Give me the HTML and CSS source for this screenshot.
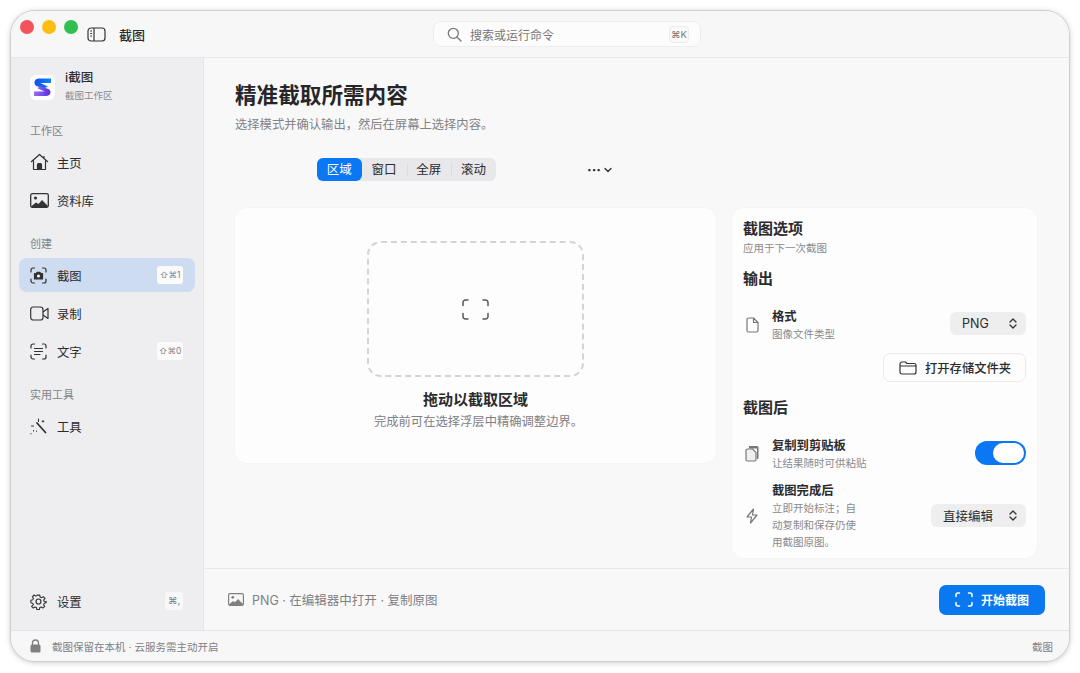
FILE: index.html
```html
<!DOCTYPE html>
<html lang="zh-CN">
<head>
    <meta charset="UTF-8">
    <meta name="viewport" content="width=device-width, initial-scale=1.0">
    <title>截图</title>
    <link rel="stylesheet" href="styles.css">
</head>
<body>
    <div class="window">
        <header class="titlebar">
            <div class="titlebar-left">
                <div class="lights">
                    <span class="light red"></span>
                    <span class="light yellow"></span>
                    <span class="light green"></span>
                </div>
                <svg class="sidebar-toggle" width="19" height="15" viewBox="0 0 19 15" fill="none" stroke="#333" stroke-width="1.2">
                    <rect x="1" y="1" width="17" height="13" rx="3"/>
                    <path d="M7 1v13M3.2 4h1.8M3.2 6.5h1.8M3.2 9h1.8"/>
                </svg>
                <span class="window-title">截图</span>
            </div>
            <div class="search">
                <svg width="15" height="15" viewBox="0 0 15 15" fill="none" stroke="#777" stroke-width="1.3" stroke-linecap="round">
                    <circle cx="6.3" cy="6.3" r="5"/>
                    <path d="M10 10l4 4"/>
                </svg>
                <span class="search-text">搜索或运行命令</span>
                <span class="search-key">⌘K</span>
            </div>
        </header>

        <div class="middle">
            <aside class="sidebar">
                <div class="brand">
                    <svg class="logo" width="25" height="25" viewBox="0 0 25 25">
                        <defs>
                            <linearGradient id="logoTop" x1="0" y1="0" x2="1" y2="0">
                                <stop offset="0" stop-color="#1a4ff0"/>
                                <stop offset="1" stop-color="#0a84ff"/>
                            </linearGradient>
                            <linearGradient id="logoBottom" x1="0" y1="0" x2="1" y2="0">
                                <stop offset="0" stop-color="#9a6cf4"/>
                                <stop offset="1" stop-color="#5a2fd8"/>
                            </linearGradient>
                        </defs>
                        <rect width="25" height="25" rx="6" fill="#fff"/>
                        <path d="M9 3.500H21V8H10.500L18 11.500L14 13.500L6.500 11C3.500 9.500 3.500 3.500 9 3.500z" fill="url(#logoTop)"/>
                        <path d="M4 21V16.500H14.500L7 13L11 11.500L18.500 14C21.500 15.500 21.500 21 16 21z" fill="url(#logoBottom)"/>
                    </svg>
                    <div class="brand-text">
                        <div class="brand-name">i截图</div>
                        <div class="brand-sub">截图工作区</div>
                    </div>
                </div>

                <div class="nav-label first">工作区</div>
                <a class="nav-item">
                    <svg width="19" height="18" viewBox="0 0 19 18" fill="none" stroke="#333" stroke-width="1.2" stroke-linejoin="round">
                        <path d="M1 9l8.500-7.500L18 9M3.500 7.500V16.500h12V7.500M14 3V5"/>
                        <path d="M7.500 16.500v-5a1 1 0 0 1 1-1h2a1 1 0 0 1 1 1v5z" fill="#333"/>
                    </svg>
                    <span>主页</span>
                </a>
                <a class="nav-item">
                    <svg width="19" height="15" viewBox="0 0 19 15">
                        <rect x=".7" y=".7" width="17.600" height="13.600" rx="1.500" fill="none" stroke="#333" stroke-width="1.300"/>
                        <circle cx="5.500" cy="5" r="1.600" fill="#333"/>
                        <path d="M1 13.500l5-4 2.500 1.500 3.500-4 6 6v1H1z" fill="#333"/>
                    </svg>
                    <span>资料库</span>
                </a>

                <div class="nav-label">创建</div>
                <a class="nav-item active">
                    <svg width="17" height="17" viewBox="0 0 17 17" fill="none" stroke="#333" stroke-width="1.200" stroke-linecap="round">
                        <path d="M1 5V3a2 2 0 0 1 2-2h1.500M12.500 1H14a2 2 0 0 1 2 2v2M16 12v2a2 2 0 0 1-2 2h-1.500M4.500 16H3a2 2 0 0 1-2-2v-2"/>
                        <path d="M4.500 6.500h1.800l.8-1.200h2.800l.8 1.200h1.800v5.500H4.500z" fill="#333" stroke-linejoin="round"/>
                        <circle cx="8.500" cy="9" r="1.500" fill="#fff" stroke="none"/>
                    </svg>
                    <span>截图</span>
                    <kbd class="shortcut">⇧⌘1</kbd>
                </a>
                <a class="nav-item">
                    <svg width="19" height="15" viewBox="0 0 19 15" fill="none" stroke="#333" stroke-width="1.200" stroke-linejoin="round">
                        <rect x=".7" y="1" width="12.300" height="13" rx="2.500"/>
                        <path d="M13 6l5-3.500v10L13 9"/>
                    </svg>
                    <span>录制</span>
                </a>
                <a class="nav-item">
                    <svg width="17" height="17" viewBox="0 0 17 17" fill="none" stroke="#333" stroke-width="1.200" stroke-linecap="round">
                        <path d="M1 5V3a2 2 0 0 1 2-2h1.500M12.500 1H14a2 2 0 0 1 2 2v2M16 12v2a2 2 0 0 1-2 2h-1.500M4.500 16H3a2 2 0 0 1-2-2v-2"/>
                        <path d="M4.500 5.500h8M4.500 8.500h8M4.500 11.500h5.500"/>
                    </svg>
                    <span>文字</span>
                    <kbd class="shortcut">⇧⌘0</kbd>
                </a>

                <div class="nav-label">实用工具</div>
                <a class="nav-item">
                    <svg width="17" height="17" viewBox="0 0 17 17" fill="none" stroke="#333" stroke-linecap="round">
                        <path d="M7 5l8.500 9.500" stroke-width="1.800"/>
                        <path d="M8.500 1v2.500M13 2.500v1.500M12.200 3.200h1.600M1.500 8h2M3.500 12.500v.5M1 15.500v.2M6.500 13v.2" stroke-width="1.100"/>
                    </svg>
                    <span>工具</span>
                </a>

                <a class="nav-item settings">
                    <svg width="17" height="17" viewBox="0 0 24 24" fill="none" stroke="#333" stroke-width="1.700" stroke-linejoin="round">
                        <circle cx="12" cy="12" r="3.500"/>
                        <path d="M10 2h4l.6 3 2.300 1 2.600-1.700 2.800 2.800L20 9.700l1 2.300 3 .6v-1 2.400l-3 .6-1 2.300 1.700 2.600-2.800 2.800-2.600-1.700-2.300 1-.6 3h-4l-.6-3-2.300-1-2.600 1.700-2.800-2.800L4 16.900l-1-2.300-3-.6V10l3-.6 1-2.300-1.700-2.500 2.800-2.800 2.600 1.700 2.300-1z" transform="translate(1.200 1.200) scale(.9)"/>
                    </svg>
                    <span>设置</span>
                    <kbd class="shortcut">⌘,</kbd>
                </a>
            </aside>

            <main class="main">
                <div class="content">
                    <h1 class="page-title">精准截取所需内容</h1>
                    <p class="page-sub">选择模式并确认输出，然后在屏幕上选择内容。</p>

                    <div class="mode-row">
                        <div class="segmented">
                            <span class="segment selected">区域</span>
                            <span class="segment">窗口</span>
                            <span class="segment divided">全屏</span>
                            <span class="segment divided">滚动</span>
                        </div>
                        <div class="more">
                            <span class="dots">···</span>
                            <svg width="8" height="6" viewBox="0 0 8 6" fill="none" stroke="#333" stroke-width="1.400" stroke-linecap="round" stroke-linejoin="round">
                                <path d="M1 1.500l3 3 3-3"/>
                            </svg>
                        </div>
                    </div>

                    <div class="panels">
                        <section class="card drop-card">
                            <div class="drop-zone">
                                <svg width="27" height="21" viewBox="0 0 27 21" fill="none" stroke="#555" stroke-width="1.500" stroke-linecap="round">
                                    <path d="M1 6.500V3.500a2.500 2.500 0 0 1 2.500-2.500H6M21 1h2.500A2.500 2.500 0 0 1 26 3.500v3M26 14.500v3a2.500 2.500 0 0 1-2.500 2.500H21M6 20H3.500A2.500 2.500 0 0 1 1 17.500v-3"/>
                                </svg>
                            </div>
                            <div class="drop-title">拖动以截取区域</div>
                            <div class="drop-sub">完成前可在选择浮层中精确调整边界。</div>
                        </section>

                        <section class="card options-card">
                            <h2 class="options-title">截图选项</h2>
                            <div class="options-sub">应用于下一次截图</div>

                            <h3 class="options-head head-output">输出</h3>
                            <div class="option-row format-row">
                                <svg class="option-icon" width="13" height="16" viewBox="0 0 13 16" fill="none" stroke="#777" stroke-width="1.200" stroke-linejoin="round">
                                    <path d="M1 2.500A1.500 1.500 0 0 1 2.500 1h5L12 5.500v8a1.500 1.500 0 0 1-1.500 1.500h-8A1.500 1.500 0 0 1 1 13.500zM7.500 1v4.500H12"/>
                                </svg>
                                <div class="option-text">
                                    <div class="option-name">格式</div>
                                    <div class="option-desc">图像文件类型</div>
                                </div>
                                <div class="select select-png">
                                    <span>PNG</span>
                                    <svg width="8" height="11" viewBox="0 0 8 11" fill="none" stroke="#333" stroke-width="1.300" stroke-linecap="round" stroke-linejoin="round">
                                        <path d="M1 4l3-3 3 3M1 7l3 3 3-3"/>
                                    </svg>
                                </div>
                            </div>
                            <div class="folder-line">
                                <div class="folder-btn">
                                    <svg width="18" height="14" viewBox="0 0 18 14" fill="none" stroke="#333" stroke-width="1.200" stroke-linejoin="round">
                                        <path d="M1 3a2 2 0 0 1 2-2h3.500l1.500 1.500h7A2 2 0 0 1 17 4.500V11a2 2 0 0 1-2 2H3a2 2 0 0 1-2-2zM1 5h16"/>
                                    </svg>
                                    <span>打开存储文件夹</span>
                                </div>
                            </div>

                            <h3 class="options-head head-after">截图后</h3>
                            <div class="option-row copy-row">
                                <svg class="option-icon" width="14" height="17" viewBox="0 0 14 17">
                                    <path d="M4 1h8a1.500 1.500 0 0 1 1.500 1.500v10a1.500 1.500 0 0 1-1.500 1.500V3.500H4z" fill="#777"/>
                                    <path d="M1 5.500A1.500 1.500 0 0 1 2.500 4h5L11 7.500v7a1.500 1.500 0 0 1-1.500 1.500h-7A1.500 1.500 0 0 1 1 14.500z" fill="#f0f0f0" stroke="#777" stroke-width="1.200"/>
                                </svg>
                                <div class="option-text">
                                    <div class="option-name">复制到剪贴板</div>
                                    <div class="option-desc">让结果随时可供粘贴</div>
                                </div>
                                <div class="toggle"><span class="knob"></span></div>
                            </div>
                            <div class="option-row done-row">
                                <svg class="option-icon" width="12" height="16" viewBox="0 0 12 16" fill="none" stroke="#777" stroke-width="1.200" stroke-linejoin="round">
                                    <path d="M7.500 1L1 9h4.500l-1 6L11 7H6.500z"/>
                                </svg>
                                <div class="option-text">
                                    <div class="option-name">截图完成后</div>
                                    <div class="option-desc long">立即开始标注；自动复制和保存仍使用截图原图。</div>
                                </div>
                                <div class="select select-edit">
                                    <span>直接编辑</span>
                                    <svg width="8" height="11" viewBox="0 0 8 11" fill="none" stroke="#333" stroke-width="1.300" stroke-linecap="round" stroke-linejoin="round">
                                        <path d="M1 4l3-3 3 3M1 7l3 3 3-3"/>
                                    </svg>
                                </div>
                            </div>
                        </section>
                    </div>
                </div>

                <footer class="action-bar">
                    <svg width="16" height="13" viewBox="0 0 16 13">
                        <rect x=".6" y=".6" width="14.800" height="11.800" rx="1.500" fill="none" stroke="#808080" stroke-width="1.200"/>
                        <circle cx="4.800" cy="4.300" r="1.400" fill="#808080"/>
                        <path d="M1 11.500l4-3.500 2 1.300 3-3.300 5 5v1.500H1z" fill="#808080"/>
                    </svg>
                    <span class="action-summary">PNG · 在编辑器中打开 · 复制原图</span>
                    <div class="start-btn">
                        <svg width="18" height="15" viewBox="0 0 18 15" fill="none" stroke="#fff" stroke-width="1.500" stroke-linecap="round">
                            <path d="M1 4.500V3a2 2 0 0 1 2-2h1.500M13.500 1H15a2 2 0 0 1 2 2v1.500M17 10.500V12a2 2 0 0 1-2 2h-1.500M4.500 14H3a2 2 0 0 1-2-2v-1.500"/>
                        </svg>
                        <span>开始截图</span>
                    </div>
                </footer>
            </main>
        </div>

        <footer class="statusbar">
            <svg width="11" height="14" viewBox="0 0 11 14">
                <path d="M2.500 6V4a3 3 0 0 1 6 0v2" fill="none" stroke="#808080" stroke-width="1.300"/>
                <rect x=".5" y="5.500" width="10" height="8" rx="1.500" fill="#808080"/>
            </svg>
            <span class="status-text">截图保留在本机 · 云服务需主动开启</span>
            <span class="status-right">截图</span>
        </footer>
    </div>
</body>
</html>
```

FILE: styles.css
```css
* {
    box-sizing: border-box;
}
html, body {
    margin: 0;
    height: 100%;
}
body {
    background: #fff;
    padding: 11px;
    overflow: hidden;
    font-family: Inter, "Noto Sans CJK SC", sans-serif;
    color: #2b2b2d;
}
h1, h2, h3, p {
    margin: 0;
}
.window {
    width: 1058px;
    height: 650px;
    border-radius: 24px;
    overflow: hidden;
    background: #f8f8f9;
    display: flex;
    flex-direction: column;
    box-shadow: 0 0 0 1px #cfcfd1, 0 1px 6px rgba(0, 0, 0, .25);
}

/* title bar */
.titlebar {
    height: 47px;
    flex: none;
    display: flex;
    background: #f7f7f8;
    border-bottom: 1px solid #e8e8ea;
}
.titlebar-left {
    width: 422px;
    display: flex;
    align-items: center;
    padding-left: 9px;
}
.lights {
    display: flex;
    gap: 8px;
    margin-top: -15px;
}
.light {
    width: 14px;
    height: 14px;
    border-radius: 50%;
}
.red { background: #f4525c; }
.yellow { background: #fdbd12; }
.green { background: #2fc050; }
.sidebar-toggle {
    margin: 1px 0 0 9px;
}
.window-title {
    margin-left: 13px;
    font-size: 13px;
    font-weight: 500;
}
.search {
    width: 268px;
    height: 26px;
    margin-top: 10px;
    padding: 0 11px 0 13px;
    display: flex;
    align-items: center;
    background: #fcfcfc;
    border: 1px solid #ededef;
    border-radius: 8px;
}
.search-text {
    margin-left: 8px;
    font-size: 12px;
    color: #777;
    flex: 1;
}
.search-key {
    width: 20px;
    height: 17px;
    font-size: 9.500px;
    line-height: 16px;
    text-align: center;
    color: #777;
    border: 1px solid #ececee;
    border-radius: 4px;
    background: #f9f9f9;
}

/* sidebar */
.middle {
    flex: 1;
    display: flex;
    min-height: 0;
}
.sidebar {
    width: 193px;
    flex: none;
    padding: 14px 8px 0;
    display: flex;
    flex-direction: column;
    background: #eeeef0;
    border-right: 1px solid #e6e6e8;
}
.brand {
    display: flex;
    align-items: center;
    gap: 10px;
    height: 28px;
    padding-left: 11px;
    margin-top: 1px;
}
.brand-text {
    margin-bottom: 1px;
}
.brand-name {
    font-size: 12.500px;
    font-weight: 500;
    line-height: 16px;
}
.brand-sub {
    font-size: 9.500px;
    line-height: 14px;
    color: #8a8a8d;
    margin-top: 3px;
}
.nav-label {
    font-size: 11px;
    line-height: 14px;
    color: #838386;
    padding-left: 11px;
    margin: 16px 0 7px;
    height: 14px;
}
.nav-label.first {
    margin-top: 23px;
    margin-bottom: 7px;
}
.nav-item {
    height: 34px;
    flex: none;
    margin-bottom: 4px;
    padding: 0 12px 0 11px;
    display: flex;
    align-items: center;
    border-radius: 8px;
    font-size: 12.300px;
}
.nav-item svg {
    flex: none;
}
.nav-item span {
    position: absolute;
    margin: 1px 0 0 27px;
}
.nav-item.active {
    background: #cddcf0;
}
.shortcut {
    margin-left: auto;
    width: 26px;
    height: 18px;
    font-family: Inter, "Noto Sans CJK SC", sans-serif;
    font-size: 8.500px;
    line-height: 18px;
    text-align: center;
    white-space: nowrap;
    color: #808083;
    background: #fbfbfc;
    border-radius: 3px;
}
.settings {
    margin-top: auto;
    margin-bottom: 12px;
}
.settings .shortcut {
    background: #f8f8f9;
    width: 18px;
    font-size: 9.500px;
}

/* main area */
.main {
    flex: 1;
    min-width: 0;
    display: flex;
    flex-direction: column;
}
.content {
    flex: 1;
    padding: 23px 32px 0 31px;
    border-bottom: 1px solid #e9e9eb;
}
.page-title {
    font-size: 21.600px;
    font-weight: 700;
    line-height: 28px;
    color: #262628;
}
.page-sub {
    font-size: 12.300px;
    line-height: 16px;
    margin-top: 8px;
    color: #838386;
}
.mode-row {
    display: flex;
    align-items: center;
    margin-top: 25px;
    padding-left: 82px;
}
.segmented {
    display: flex;
    width: 179px;
    height: 23px;
    background: #e8e8ea;
    border-radius: 6px;
}
.segment {
    width: 45px;
    font-size: 12.500px;
    line-height: 23px;
    text-align: center;
    border-radius: 6px;
}
.segment.divided {
    background: linear-gradient(#dcdcde, #dcdcde) left center / 1px 12px no-repeat;
    border-radius: 0;
}
.segment.selected {
    background: #0a78f5;
    color: #fff;
}
.more {
    margin-left: 91px;
    display: flex;
    align-items: center;
    gap: 3px;
}
.dots {
    font-size: 14px;
    font-weight: 700;
    line-height: 14px;
}
.panels {
    display: flex;
    align-items: flex-start;
    gap: 16px;
    margin-top: 27px;
}
.card {
    background: #fdfdfd;
    border-radius: 12px;
    box-shadow: 0 0 0 1px #f5f5f6;
}
.drop-card {
    width: 481px;
    height: 255px;
    padding-top: 33px;
    display: flex;
    flex-direction: column;
    align-items: center;
}
.drop-zone {
    width: 217px;
    height: 136px;
    display: flex;
    align-items: center;
    justify-content: center;
    border: 2px dashed #d4d4d6;
    border-radius: 14px;
}
.drop-title {
    margin-top: 13px;
    font-size: 15px;
    font-weight: 600;
    line-height: 20px;
}
.drop-sub {
    margin: 2px 0 0 6px;
    font-size: 12.300px;
    line-height: 20px;
    color: #808083;
}

/* options panel */
.options-card {
    width: 305px;
    height: 350px;
    padding: 11px 11px 0;
}
.options-title {
    font-size: 15px;
    font-weight: 600;
    line-height: 20px;
}
.options-sub {
    margin-top: 2px;
    font-size: 10.500px;
    line-height: 16px;
    color: #8a8a8d;
}
.options-head {
    font-size: 15px;
    font-weight: 600;
    line-height: 20px;
}
.head-output {
    margin-top: 12px;
}
.head-after {
    margin-top: 16px;
}
.option-row {
    display: flex;
    align-items: center;
}
.option-icon {
    flex: none;
    margin-left: 2px;
}
.option-text {
    width: 120px;
    margin-left: 13px;
    flex: none;
}
.option-name {
    font-size: 12.300px;
    font-weight: 600;
    line-height: 16px;
}
.option-desc {
    margin-top: 2px;
    font-size: 10.500px;
    line-height: 16px;
    color: #8a8a8d;
}
.option-desc.long {
    width: 88px;
    line-height: 17px;
    margin-top: 1px;
}
.format-row {
    margin-top: 20px;
}
.format-row .option-icon {
    margin: 0 0 3px 3px;
}
.format-row .option-text {
    margin-left: 13px;
}
.select {
    margin-left: auto;
    height: 23px;
    display: flex;
    align-items: center;
    justify-content: space-between;
    padding: 0 9px 0 12px;
    background: #eeeeef;
    border-radius: 6px;
    font-size: 12.500px;
}
.select-png {
    width: 76px;
    margin-bottom: 6px;
}
.select-edit {
    width: 95px;
    margin-bottom: 4px;
}
.folder-line {
    display: flex;
    justify-content: flex-end;
    margin-top: 10px;
}
.folder-btn {
    width: 143px;
    height: 29px;
    display: flex;
    align-items: center;
    gap: 8px;
    padding-left: 15px;
    background: #fdfdfd;
    border: 1px solid #ebebed;
    border-radius: 7px;
    font-size: 12.300px;
    font-weight: 500;
}
.copy-row {
    margin-top: 20px;
}
.copy-row .option-icon {
    margin-bottom: 4px;
}
.toggle {
    margin-left: auto;
    margin-bottom: 4px;
    width: 51px;
    height: 24px;
    padding: 2px;
    background: #0a78f5;
    border-radius: 12px;
    display: flex;
    justify-content: flex-end;
}
.knob {
    width: 31px;
    height: 20px;
    background: #fff;
    border-radius: 10px;
}
.done-row {
    margin-top: 11px;
}
.done-row .option-icon {
    margin: 0 0 2px 3px;
}
.done-row .option-text {
    margin-left: 14px;
}

/* bottom bars */
.action-bar {
    height: 61px;
    flex: none;
    display: flex;
    align-items: center;
    padding: 0 24px;
}
.action-summary {
    margin-left: 8px;
    font-size: 12.500px;
    color: #808083;
}
.start-btn {
    margin-left: auto;
    width: 106px;
    height: 30px;
    display: flex;
    align-items: center;
    justify-content: center;
    gap: 8px;
    background: #0a78f0;
    border-radius: 7px;
    color: #fff;
    font-size: 12px;
    font-weight: 600;
}
.statusbar {
    height: 31px;
    flex: none;
    display: flex;
    align-items: center;
    padding: 0 16px 0 19px;
    background: #f7f7f8;
    border-top: 1px solid #e3e3e5;
    font-size: 10.500px;
    color: #808083;
}
.status-text {
    margin-left: 11px;
}
.status-right {
    margin-left: auto;
}
```
